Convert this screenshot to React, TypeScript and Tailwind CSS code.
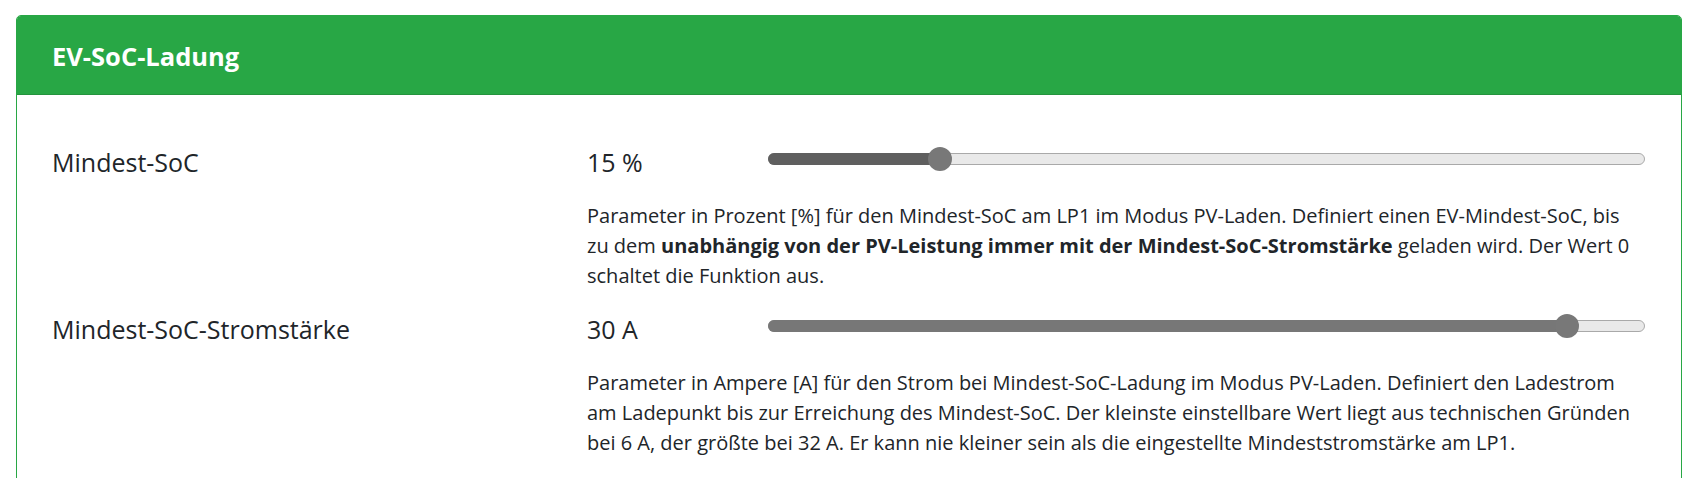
import React from "react";

type Setting = {
  label: string;
  value: number;
  unit: string;
  min: number;
  max: number;
  fill: string;
  description: React.ReactNode;
};

const settings: Setting[] = [
  {
    label: "Mindest-SoC",
    value: 15,
    unit: "%",
    min: 0,
    max: 80,
    fill: "bg-[#5f5f5f]",
    description: (
      <>
        Parameter in Prozent [%] für den Mindest-SoC am LP1 im Modus PV-Laden. Definiert einen
        EV-Mindest-SoC, bis zu dem{" "}
        <b className="font-bold">unabhängig von der PV-Leistung immer mit der Mindest-SoC-Stromstärke</b>{" "}
        geladen wird. Der Wert 0 schaltet die Funktion aus.
      </>
    ),
  },
  {
    label: "Mindest-SoC-Stromstärke",
    value: 30,
    unit: "A",
    min: 6,
    max: 32,
    fill: "bg-[#777777]",
    description: (
      <>
        Parameter in Ampere [A] für den Strom bei Mindest-SoC-Ladung im Modus PV-Laden. Definiert den
        Ladestrom am Ladepunkt bis zur Erreichung des Mindest-SoC. Der kleinste einstellbare Wert liegt aus
        technischen Gründen bei 6 A, der größte bei 32 A. Er kann nie kleiner sein als die eingestellte
        Mindeststromstärke am LP1.
      </>
    ),
  },
];

function RangeSlider({ value, min, max, fill }: { value: number; min: number; max: number; fill: string }) {
  const frac = (value - min) / (max - min);
  // thumb is 24px wide, it travels inside the track
  const pos = `calc(12px + (100% - 24px) * ${frac})`;
  return (
    <div className="relative h-6 w-full">
      <div className="absolute left-0 right-0 top-[6px] h-[12px] rounded-full border border-[#a9a9a9] bg-[#e9e9e9]" />
      <div className={`absolute left-0 top-[6px] h-[12px] rounded-l-full ${fill}`} style={{ width: pos }} />
      <div
        className="absolute top-0 h-6 w-6 -translate-x-1/2 rounded-full bg-[#787878]"
        style={{ left: pos }}
      />
    </div>
  );
}

function SettingRow({ s }: { s: Setting }) {
  return (
    <div className="grid grid-cols-[535px_1fr]">
      <div className="text-[25px] leading-[37px]">{s.label}</div>
      <div>
        <div className="flex items-start">
          <div className="w-[181px] text-[25px] leading-[37px]">
            {s.value} {s.unit}
          </div>
          <div className="mt-[3px] flex-1">
            <RangeSlider value={s.value} min={s.min} max={s.max} fill={s.fill} />
          </div>
        </div>
        <p className="mt-5 w-[1045px] text-[20px] leading-[30px]">{s.description}</p>
      </div>
    </div>
  );
}

export default function App() {
  return (
    <div
      className="min-h-screen bg-white pl-[16px] pr-[17px] pt-[15px] text-[#212529]"
      style={{ fontFamily: "'Open Sans', 'Noto Sans', sans-serif" }}
    >
      <div className="overflow-hidden rounded-[5px] border border-[#28a745]">
        <div className="flex h-[79px] items-center border-b border-[#24933d] bg-[#28a745] px-[35px] pt-[2px]">
          <h3 className="text-[25.5px] font-bold text-white">EV-SoC-Ladung</h3>
        </div>
        <div className="space-y-[20px] pb-10 pl-[35px] pr-[36px] pt-[49px]">
          {settings.map((s) => (
            <SettingRow key={s.label} s={s} />
          ))}
        </div>
      </div>
    </div>
  );
}
